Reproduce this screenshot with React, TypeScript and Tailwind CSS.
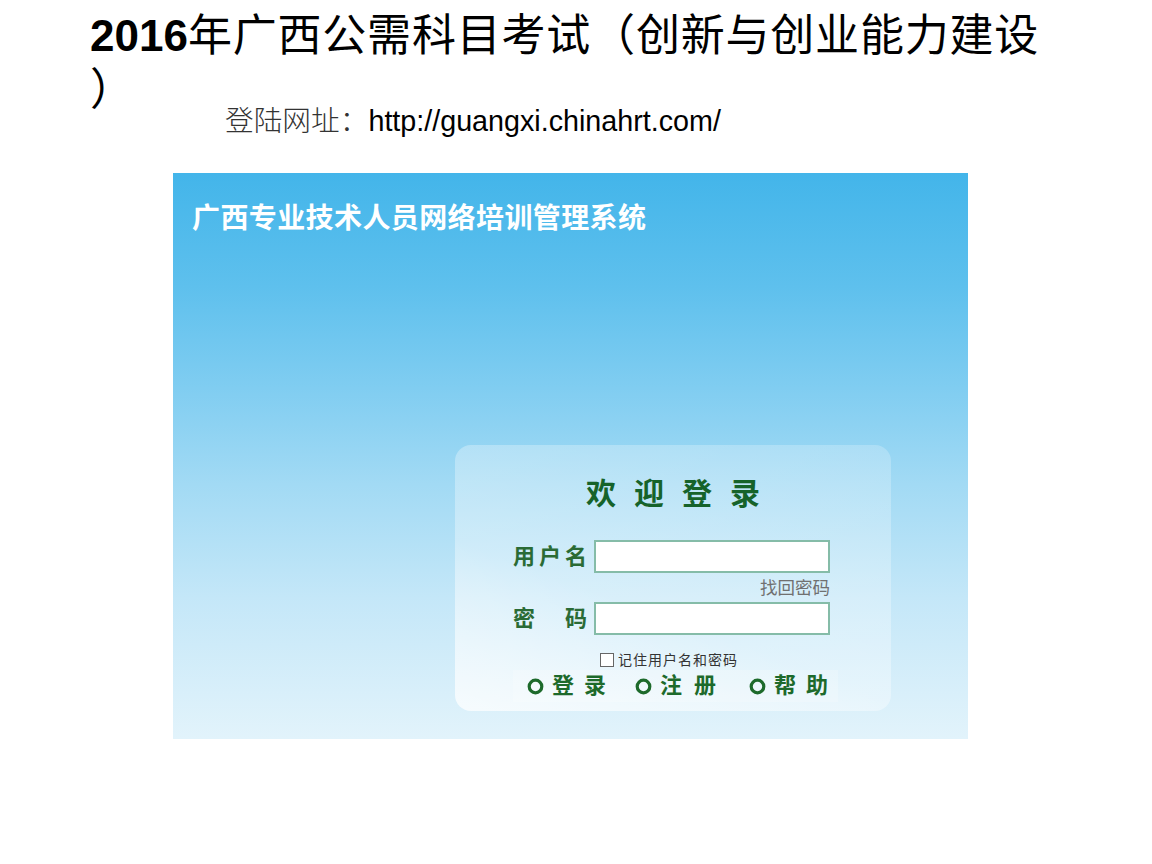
import React from "react";

const cjk = '"Liberation Sans", "Noto Sans CJK SC", sans-serif';

function Ring() {
  return (
    <svg width="17" height="17" viewBox="0 0 17 17" className="shrink-0">
      <circle cx="8.5" cy="8.5" r="6.3" fill="none" stroke="#1d6a2b" strokeWidth="3.2" />
    </svg>
  );
}

export default function App() {
  return (
    <div className="w-[1152px] h-[864px] bg-white overflow-hidden" style={{ fontFamily: cjk }}>
      <div className="pl-[90px] pt-[9px] text-[44px] leading-[54px] text-black">
        <div className="whitespace-nowrap">
          <span className="font-bold">2016</span>
          <span className="tracking-[0.8px]">年广西公需科目考试（创新与创业能力建设</span>
        </div>
        <div>）</div>
      </div>
      <div className="-mt-[10px] pl-[225px] text-[28.7px] leading-[28px] text-black whitespace-nowrap">
        <span className="text-[#333] font-light">登陆网址：</span>http://guangxi.chinahrt.com/
      </div>

      <div className="ml-[173px] mt-[38px] w-[795px] h-[566px] flex flex-col bg-[linear-gradient(180deg,#43b5ea_0%,#5ec0ed_20%,#80cdf1_38%,#a2daf4_55%,#c4e7f8_75%,#e2f3fb_100%)]">
        <div className="pl-[19px] pt-[29px] text-[28px] leading-[34px] font-bold text-white tracking-[0.4px] whitespace-nowrap">
          广西专业技术人员网络培训管理系统
        </div>
        <div className="flex-1" />
        <div className="ml-[282px] mb-[28px] w-[436px] h-[266px] rounded-[16px] bg-[linear-gradient(20deg,rgba(255,255,255,0.75)_0%,rgba(255,255,255,0.35)_40%,rgba(255,255,255,0.22)_100%)] flex flex-col">
          <div className="pt-[33px] h-[95px] flex justify-center">
            <div className="text-[30px] leading-[32px] font-bold text-[#16632a] tracking-[18px] pl-[18px] whitespace-nowrap">
              欢迎登录
            </div>
          </div>
          <div className="pl-[58px] flex flex-col">
            <div className="flex items-center h-[33px]">
              <div className="w-[74px] flex justify-between text-[22px] leading-[24px] font-bold text-[#2a6b35]">
                <span>用</span>
                <span>户</span>
                <span>名</span>
              </div>
              <div className="ml-[7px] w-[236px] h-[33px] bg-white border-2 border-[#85bca8]" />
            </div>
            <div className="w-[317px] flex justify-end h-[29px] items-center text-[17.5px] leading-[18px] text-[#707070] whitespace-nowrap">
              找回密码
            </div>
            <div className="flex items-center h-[33px]">
              <div className="w-[74px] flex justify-between text-[22px] leading-[24px] font-bold text-[#2a6b35]">
                <span>密</span>
                <span>码</span>
              </div>
              <div className="ml-[7px] w-[236px] h-[33px] bg-white border-2 border-[#85bca8]" />
            </div>
            <div className="mt-[18px] h-[14px] flex items-center pl-[87px]">
              <div className="w-[14px] h-[14px] bg-white border border-[#666] shrink-0" />
              <span className="ml-[4px] text-[14px] leading-[14px] text-[#333] tracking-[1px] whitespace-nowrap">记住用户名和密码</span>
            </div>
            <div className="mt-[3px] w-[325px] h-[32px] bg-white/20 flex items-center pl-[14px] text-[22px] leading-[24px] font-bold text-[#1d6a2b] whitespace-nowrap">
              <div className="flex items-center shrink-0">
                <Ring />
                <span className="ml-[8px] tracking-[10px]">登录</span>
              </div>
              <div className="flex items-center ml-[19px] shrink-0">
                <Ring />
                <span className="ml-[8px] tracking-[12px]">注册</span>
              </div>
              <div className="flex items-center ml-[21px] shrink-0">
                <Ring />
                <span className="ml-[8px] tracking-[10px]">帮助</span>
              </div>
            </div>
          </div>
        </div>
      </div>
    </div>
  );
}
